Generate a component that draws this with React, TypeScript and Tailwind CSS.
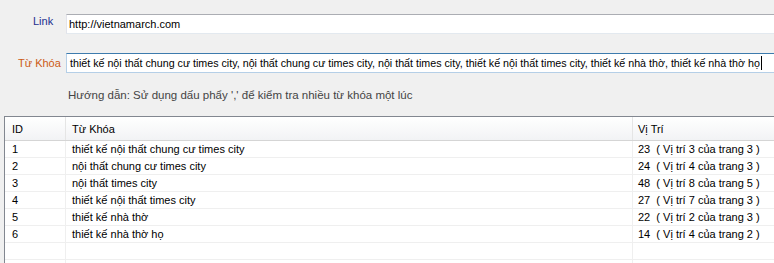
import React from "react";

const rows = [
  ["1", "thiết kế nội thất chung cư times city", "23  ( Vị trí 3 của trang 3 )"],
  ["2", "nội thất chung cư times city", "24  ( Vị trí 4 của trang 3 )"],
  ["3", "nội thất times city", "48  ( Vị trí 8 của trang 5 )"],
  ["4", "thiết kế nội thất times city", "27  ( Vị trí 7 của trang 3 )"],
  ["5", "thiết kế nhà thờ", "22  ( Vị trí 2 của trang 3 )"],
  ["6", "thiết kế nhà thờ họ", "14  ( Vị trí 4 của trang 2 )"],
  ["", "", ""],
  ["", "", ""],
];

export default function App() {
  return (
    <div
      className="w-[774px] h-[263px] overflow-hidden bg-[#f0f0f0] text-[11px] text-black"
      style={{ fontFamily: '"Liberation Sans", Arial, sans-serif' }}
    >
      <div className="flex items-center pt-[14px]">
        <div className="w-[66px] shrink-0 whitespace-nowrap pl-[33px] text-[#1c2f8f] -mt-[5px]">Link</div>
        <div className="w-[760px] shrink-0 h-[20px] bg-white border border-[#e2e3ea] border-t-[#abadb3] border-b-[#e3e9ef] flex items-center pl-[2px]">
          http://vietnamarch.com
        </div>
      </div>
      <div className="flex items-center mt-[19px]">
        <div className="w-[66px] shrink-0 whitespace-nowrap pl-[18px] text-[#cc5a14]">Từ Khóa</div>
        <div className="w-[760px] shrink-0 h-[20px] bg-white border border-[#b5cfe7] border-t-[#3d7bad] border-b-[#b5cfe7] flex items-center pl-[3px] whitespace-nowrap text-[10.7px]">
          <span>
            thiết kế nội thất chung cư times city, nội thất chung cư times city, nội thất times city, thiết kế nội thất times city, thiết kế nhà thờ, thiết kế nhà thờ họ
          </span>
          <span className="inline-block w-px h-[14px] bg-black ml-px" />
        </div>
      </div>
      <div className="pl-[68px] mt-[14px] text-[#444] text-[11.5px] whitespace-nowrap">
        Hướng dẫn: Sử dụng dấu phẩy ',' để kiểm tra nhiều từ khóa một lúc
      </div>
      <div className="ml-[4px] mt-[12px] w-[790px] bg-white border-l border-t border-[#828790]">
        <div className="flex h-[24px] bg-gradient-to-b from-white to-[#f2f3f5] border-b border-[#d5d5d5]">
          <div className="w-[61px] shrink-0 pl-[7px] flex items-center border-r border-[#e5e5e5]">ID</div>
          <div className="w-[567px] shrink-0 pl-[6px] flex items-center border-r border-[#e5e5e5]">Từ Khóa</div>
          <div className="flex-1 pl-[5px] flex items-center">Vị Trí</div>
        </div>
        {rows.map((r, i) => (
          <div key={i} className="flex h-[17px] border-b border-[#efefef]">
            <div className="w-[61px] shrink-0 pl-[7px] flex items-center border-r border-[#efefef]">{r[0]}</div>
            <div className="w-[567px] shrink-0 pl-[6px] flex items-center border-r border-[#efefef]">{r[1]}</div>
            <div className="flex-1 pl-[5px] flex items-center whitespace-pre">{r[2]}</div>
          </div>
        ))}
      </div>
    </div>
  );
}
